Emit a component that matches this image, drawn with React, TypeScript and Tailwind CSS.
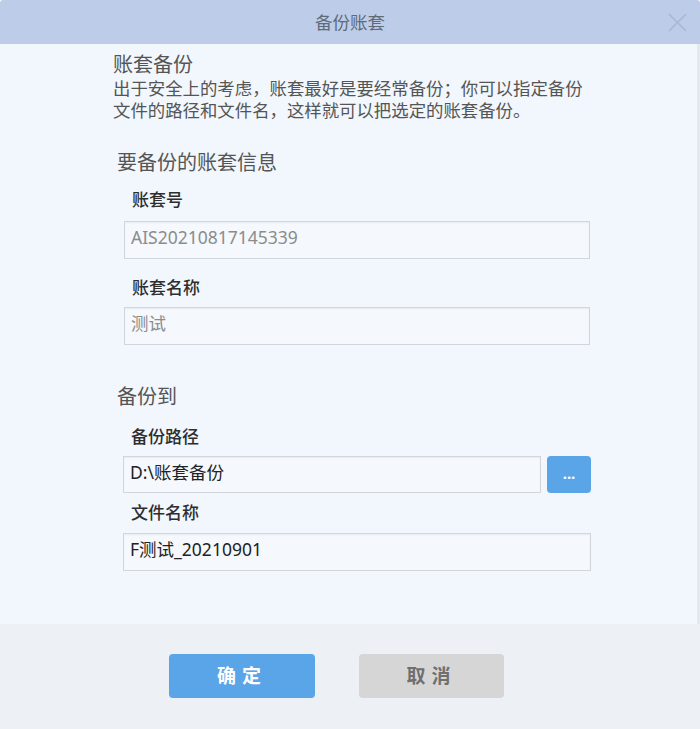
import React from 'react'

const font = { fontFamily: '"Noto Sans", "Noto Sans CJK SC", sans-serif' }

interface FieldProps {
  value: string
  readOnly?: boolean
  className?: string
}

const Field: React.FC<FieldProps> = ({ value, readOnly, className }) => (
  <div
    className={
      'flex items-center border border-[#d2d6db] bg-[#f5f8fc] pl-[6px] pb-[5px] text-[17.5px] shadow-[inset_0_1px_2px_rgba(0,0,0,0.06)] ' +
      (readOnly ? 'text-[#8c8c8c] ' : 'text-[#222] ') +
      (className ?? '')
    }
  >
    {value}
  </div>
)

const Label: React.FC<{ children: React.ReactNode; className?: string }> = ({ children, className }) => (
  <div className={'pl-[8px] text-[17px] leading-[24px] font-medium text-[#2e2e2e] ' + (className ?? '')}>{children}</div>
)

export default function App() {
  return (
    <div className="flex h-[729px] w-[700px] flex-col overflow-hidden" style={font}>
      {/* title bar */}
      <div className="relative flex h-[44px] shrink-0 items-center justify-center rounded-t-[3px] bg-[#bdcde9]">
        <span className="text-[17.5px] text-[#5f6b78]">备份账套</span>
        <svg
          className="absolute right-[13px] top-[13px]"
          width="19"
          height="19"
          viewBox="0 0 19 19"
          fill="none"
          stroke="#a6b9d1"
          strokeWidth="1.6"
        >
          <path d="M1 1 L18 18 M18 1 L1 18" />
        </svg>
      </div>

      {/* body */}
      <div className="flex-1 border-r-[3px] border-r-[#e4e9ef] bg-[#f1f7fd] pl-[113px]">
        <div className="mt-[9px] text-[20px] leading-[24px] text-[#555]">账套备份</div>
        <div className="text-[17.4px] leading-[22px] text-[#555]">
          <div>出于安全上的考虑，账套最好是要经常备份；你可以指定备份</div>
          <div>文件的路径和文件名，这样就可以把选定的账套备份。</div>
        </div>

        <div className="mt-[29px] pl-[4px] text-[20px] leading-[26px] text-[#555]">要备份的账套信息</div>

        <div className="pl-[11px]">
          <Label className="mt-[12px]">账套号</Label>
          <Field readOnly value="AIS20210817145339" className="mt-[9px] h-[38px] w-[466px]" />
          <Label className="mt-[17px]">账套名称</Label>
          <Field readOnly value="测试" className="mt-[7px] h-[38px] w-[466px]" />
        </div>

        <div className="mt-[39px] pl-[4px] text-[20px] leading-[26px] text-[#555]">备份到</div>

        <div className="pl-[10px]">
          <Label className="mt-[15px]">备份路径</Label>
          <div className="mt-[7px] flex gap-[6px]">
            <Field value="D:\账套备份" className="h-[37px] w-[418px]" />
            <button className="flex h-[37px] w-[44px] items-center justify-center rounded-[4px] bg-[#5aa4e8] pb-[2px] text-[15px] font-bold leading-none text-white">
              ...
            </button>
          </div>
          <Label className="mt-[8px]">文件名称</Label>
          <Field value="F测试_20210901" className="mt-[8px] h-[38px] w-[468px]" />
        </div>
      </div>

      {/* footer */}
      <div className="flex h-[105px] shrink-0 items-start gap-[44px] bg-[#edf0f4] pl-[169px] pt-[30px]">
        <button className="h-[44px] w-[146px] rounded-[4px] bg-[#5aa4e8] text-[19px] font-bold tracking-[6px] text-white">
          确定
        </button>
        <button className="h-[44px] w-[145px] rounded-[4px] bg-[#d6d6d6] text-[19px] font-bold tracking-[6px] text-[#6f6f6f]">
          取消
        </button>
      </div>
    </div>
  )
}
